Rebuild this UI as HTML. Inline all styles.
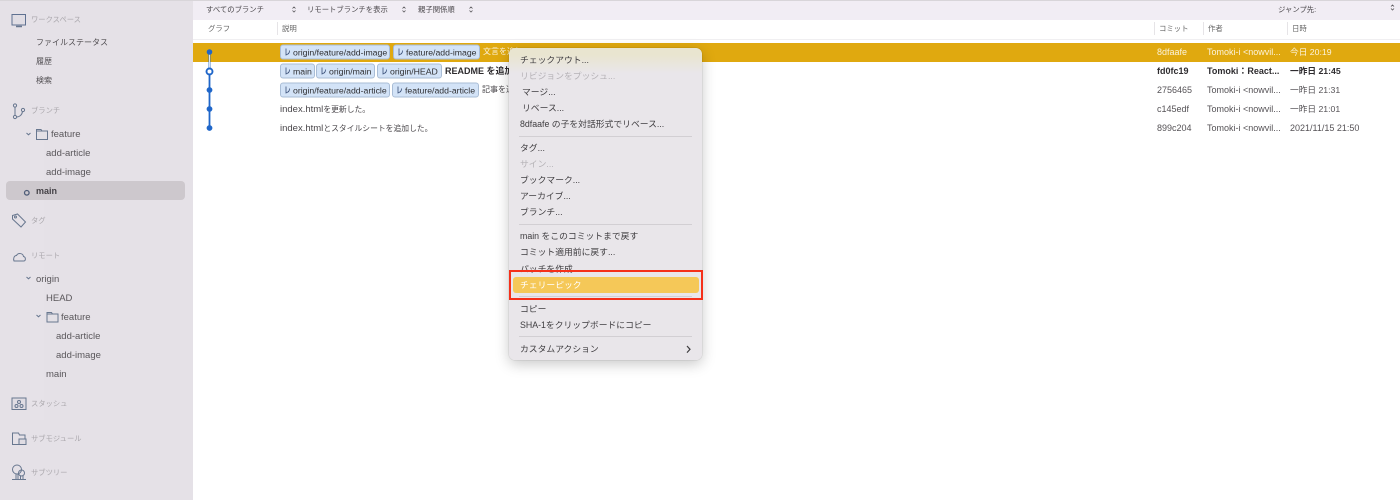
<!DOCTYPE html>
<html lang="ja"><head><meta charset="utf-8"><title>Sourcetree</title>
<style>
html,body{margin:0;padding:0;width:1400px;height:500px;overflow:hidden;background:#fff}
body{position:relative;font-family:"Liberation Sans","Noto Sans CJK JP",sans-serif;font-size:9px;color:#4a474b;filter:blur(.35px)}
.t,.a{position:absolute}
.t{white-space:nowrap;line-height:14px;height:14px;transform:translateY(-7px)}
.h{color:#aaa7ac;font-size:7.3px}
.s{color:#5a575b;font-size:9.5px;transform:translateY(-6px)}
.j{color:#514e52;font-size:8px}
.g{font-size:7.4px;color:#666}
.tb{font-size:7.35px}
.ix{transform:translateY(-6px)}
.tag{position:absolute;height:15px;line-height:14px;background:#d3e3f7;border:1px solid #a9bdd6;border-radius:3px;box-sizing:border-box;color:#2f2f32;font-size:8.7px;white-space:nowrap;padding-left:12px;transform:translateY(-7.5px)}
.tag svg{position:absolute;left:3px;top:2px}
.sep{position:absolute;left:519px;width:173px;height:1px;background:#d2cfd3}
.m{position:absolute;left:520px;white-space:nowrap;line-height:14px;height:14px;transform:translateY(-7px);color:#3f3d40;font-size:8.8px}
.d{color:#b5b2b6}
.c{position:absolute;white-space:nowrap;line-height:14px;height:14px;transform:translateY(-7px);color:#555256;font-size:9px}
.dt{font-size:8.7px}
.w{color:#fbf3dc}
.b{font-weight:bold;color:#2e2c2f}
.col{position:absolute;top:22px;width:1px;height:13px;background:#e6e4e7}
</style></head>
<body>
<div class="a" style="left:0;top:0;width:193px;height:500px;background:#e5e1e7"></div>
<div class="a" style="left:30px;top:120px;width:14px;height:300px;background:#e6e2e8"></div>
<div class="a" style="left:0;top:0;width:1400px;height:1px;background:#d8d5d9"></div>
<div class="a" style="left:193px;top:1px;width:1207px;height:19px;background:#f1edf4"></div>
<div class="a" style="left:193px;top:39px;width:1207px;height:1px;background:#f0eff1"></div>

<svg class="a" style="left:0;top:0" width="193" height="500" fill="none" stroke="#68778f" stroke-width="1">
<rect x="12" y="14.5" width="13.5" height="10.5" fill="#e0dde4" stroke="#5f7191"/><path d="M16 26.5h6" stroke-width="1.5"/>
<circle cx="15" cy="105.5" r="1.6"/><circle cx="15" cy="117" r="1.6"/><circle cx="23" cy="110" r="1.6"/><path d="M15 107v8.4M22.5 111.5c-.5 3.500-3 5.500-6 5.500"/>
<path d="M12.5 215.500l5-1.500 8 8-4.500 5-8.500-8z"/><circle cx="15.500" cy="217" r="1"/>
<path d="M14 261h9.500c2.500 0 2.500-4 0-4.500-.5-3.500-5.500-4-7-1-2.500 0-3.500 3.500-2.500 5.500z"/>
<rect x="12" y="398" width="14" height="11.500" fill="#dfdce3"/><circle cx="19" cy="402" r="1.500"/><circle cx="16.500" cy="406" r="1.500"/><circle cx="21.500" cy="406" r="1.500"/>
<path d="M12.500 433h6l1 2h5.500v9.500h-12.500z"/><rect x="19" y="439" width="7" height="5.500" fill="#dfdce3"/>
<circle cx="17" cy="469.500" r="4.500"/><circle cx="21.500" cy="473" r="3"/><path d="M12 479.500h14M16 474v5M18 474v5M20.500 476v3.500M23 476v3.500"/>
<rect x="36.500" y="131" width="11" height="8.500" fill="#e3e0e6"/><path d="M36.500 131v-1.500h4.500l1 1.500"/>
<path d="M26.500 133l2 1.800 2-1.800M26.500 277l2 1.800 2-1.800M36.500 315l2 1.800 2-1.800"/>
<rect x="47" y="314" width="11" height="8" fill="#e3e0e6"/><path d="M47 314v-1.500h4.500l1 1.500"/>
</svg>
<div class="a" style="left:6px;top:181px;width:179px;height:19px;background:#cdc8cd;border-radius:4px"></div>
<svg class="a" style="left:23px;top:189px" width="8" height="8" fill="none"><circle cx="3.800" cy="3.800" r="2.300" stroke="#4f5d78" stroke-width="1.300"/></svg>

<span class="t h" style="left:31px;top:20px">ワークスペース</span>
<span class="t j" style="left:36px;top:43px">ファイルステータス</span>
<span class="t j" style="left:36px;top:62px">履歴</span>
<span class="t j" style="left:36px;top:81px">検索</span>
<span class="t h" style="left:31px;top:111px">ブランチ</span>
<span class="t s" style="left:51px;top:134px">feature</span>
<span class="t s" style="left:46px;top:153px">add-article</span>
<span class="t s" style="left:46px;top:172px">add-image</span>
<span class="t b" style="left:36px;top:191px;color:#454247;font-size:9px">main</span>
<span class="t h" style="left:31px;top:221px">タグ</span>
<span class="t h" style="left:31px;top:256px">リモート</span>
<span class="t s" style="left:36px;top:279px">origin</span>
<span class="t s" style="left:46px;top:298px">HEAD</span>
<span class="t s" style="left:61px;top:317px">feature</span>
<span class="t s" style="left:56px;top:336px">add-article</span>
<span class="t s" style="left:56px;top:355px">add-image</span>
<span class="t s" style="left:46px;top:374px">main</span>
<span class="t h" style="left:31px;top:404px">スタッシュ</span>
<span class="t h" style="left:31px;top:439px">サブモジュール</span>
<span class="t h" style="left:31px;top:473px">サブツリー</span>

<span class="t tb" style="left:206px;top:10px">すべてのブランチ</span>
<span class="t tb" style="left:307px;top:10px">リモートブランチを表示</span>
<span class="t tb" style="left:418px;top:10px">親子関係順</span>
<span class="t tb" style="left:1278px;top:10px">ジャンプ先:</span>
<svg class="a" style="left:0;top:0" width="1400" height="20" fill="none" stroke="#5c5a5e" stroke-width=".8">
<path d="M292.500 8.500l1.500-1.500 1.500 1.500M292.500 10.500l1.500 1.500 1.500-1.500M402.500 8.500l1.500-1.500 1.500 1.500M402.500 10.500l1.500 1.500 1.500-1.500M469.500 8.500l1.500-1.500 1.500 1.500M469.500 10.500l1.500 1.500 1.500-1.500M1391 6.500l1.500-1.500 1.500 1.500M1391 8.500l1.500 1.500 1.500-1.500"/>
</svg>

<span class="t g" style="left:208px;top:29px">グラフ</span>
<span class="t g" style="left:282px;top:29px">説明</span>
<span class="t g" style="left:1159px;top:29px">コミット</span>
<span class="t g" style="left:1208px;top:29px">作者</span>
<span class="t g" style="left:1292px;top:29px">日時</span>
<div class="col" style="left:277px"></div><div class="col" style="left:1154px"></div><div class="col" style="left:1203px"></div><div class="col" style="left:1287px"></div>

<div class="a" style="left:193px;top:43px;width:1207px;height:19px;background:#e0a90f"></div>

<svg class="a" style="left:200px;top:43px" width="20" height="95" fill="none">
<path d="M9.500 9v76" stroke="#1f66c9" stroke-width="1.800"/>
<path d="M9.500 11v16" stroke="#eef3fb" stroke-width=".9"/>
<circle cx="9.500" cy="9" r="2.800" fill="#1f66c9"/>
<circle cx="9.500" cy="28.500" r="3" fill="#fff" stroke="#1f66c9" stroke-width="1.900"/>
<circle cx="9.500" cy="47" r="2.900" fill="#1f66c9"/>
<circle cx="9.500" cy="66" r="2.900" fill="#1f66c9"/>
<circle cx="9.500" cy="85" r="2.900" fill="#1f66c9"/>
</svg>

<div class="tag" style="left:280px;top:52px;width:110px">origin/feature/add-image<svg width="8" height="10" fill="none" stroke="#3a4f78" stroke-width=".8"><path d="M2 1v7M2 7c2.500 0 3.500-1.500 3.500-4"/></svg></div>
<div class="tag" style="left:393px;top:52px;width:87px">feature/add-image<svg width="8" height="10" fill="none" stroke="#3a4f78" stroke-width=".8"><path d="M2 1v7M2 7c2.500 0 3.500-1.500 3.500-4"/></svg></div>
<span class="t w" style="left:483px;top:52px;font-size:8px">文言を追加</span>

<div class="tag" style="left:280px;top:71px;width:35px">main<svg width="8" height="10" fill="none" stroke="#3a4f78" stroke-width=".8"><path d="M2 1v7M2 7c2.500 0 3.500-1.500 3.500-4"/></svg></div>
<div class="tag" style="left:316px;top:71px;width:59px">origin/main<svg width="8" height="10" fill="none" stroke="#3a4f78" stroke-width=".8"><path d="M2 1v7M2 7c2.500 0 3.500-1.500 3.500-4"/></svg></div>
<div class="tag" style="left:377px;top:71px;width:65px">origin/HEAD<svg width="8" height="10" fill="none" stroke="#3a4f78" stroke-width=".8"><path d="M2 1v7M2 7c2.500 0 3.500-1.500 3.500-4"/></svg></div>
<span class="t b" style="left:445px;top:71px">README を追加</span>

<div class="tag" style="left:280px;top:90px;width:110px">origin/feature/add-article<svg width="8" height="10" fill="none" stroke="#3a4f78" stroke-width=".8"><path d="M2 1v7M2 7c2.500 0 3.500-1.500 3.500-4"/></svg></div>
<div class="tag" style="left:392px;top:90px;width:87px">feature/add-article<svg width="8" height="10" fill="none" stroke="#3a4f78" stroke-width=".8"><path d="M2 1v7M2 7c2.500 0 3.500-1.500 3.500-4"/></svg></div>
<span class="t" style="left:482px;top:90px;font-size:8px">記事を追加</span>
<span class="t ix" style="left:280px;top:109px;font-size:9.5px">index.html<span style="font-size:7.8px">を更新した。</span></span>
<span class="t ix" style="left:280px;top:128px;font-size:9.5px">index.html<span style="font-size:7.8px">とスタイルシートを追加した。</span></span>

<span class="c w" style="left:1157px;top:52px">8dfaafe</span>
<span class="c w" style="left:1207px;top:52px">Tomoki-i &lt;nowvil...</span>
<span class="c w dt" style="left:1290px;top:52px">今日 20:19</span>
<span class="c b" style="left:1157px;top:71px">fd0fc19</span>
<span class="c b" style="left:1207px;top:71px">Tomoki：React...</span>
<span class="c b dt" style="left:1290px;top:71px">一昨日 21:45</span>
<span class="c" style="left:1157px;top:90px">2756465</span>
<span class="c" style="left:1207px;top:90px">Tomoki-i &lt;nowvil...</span>
<span class="c dt" style="left:1290px;top:90px">一昨日 21:31</span>
<span class="c" style="left:1157px;top:109px">c145edf</span>
<span class="c" style="left:1207px;top:109px">Tomoki-i &lt;nowvil...</span>
<span class="c dt" style="left:1290px;top:109px">一昨日 21:01</span>
<span class="c" style="left:1157px;top:128px">899c204</span>
<span class="c" style="left:1207px;top:128px">Tomoki-i &lt;nowvil...</span>
<span class="c" style="left:1290px;top:128px">2021/11/15 21:50</span>

<div class="a" style="left:509px;top:48px;width:193px;height:312px;border-radius:6px;box-shadow:0 4px 14px rgba(0,0,0,.22),0 0 1px rgba(0,0,0,.35);background:linear-gradient(#e9e5d0 0,#e9e5d0 7px,#e9e6ea 25px)"></div>

<span class="m" style="top:60px">チェックアウト...</span>
<span class="m d" style="top:76px">リビジョンをプッシュ...</span>
<span class="m" style="top:92px;left:522px">マージ...</span>
<span class="m" style="top:108px;left:522px">リベース...</span>
<span class="m" style="top:124px">8dfaafe の子を対話形式でリベース...</span>
<div class="sep" style="top:136px"></div>
<span class="m" style="top:148px">タグ...</span>
<span class="m d" style="top:164px">サイン...</span>
<span class="m" style="top:180px">ブックマーク...</span>
<span class="m" style="top:196px">アーカイブ...</span>
<span class="m" style="top:212px">ブランチ...</span>
<div class="sep" style="top:224px"></div>
<span class="m" style="top:236px">main をこのコミットまで戻す</span>
<span class="m" style="top:252px">コミット適用前に戻す...</span>
<span class="m" style="top:268.500px">パッチを作成...</span>
<div class="a" style="left:509px;top:270px;width:194px;height:30px;box-sizing:border-box;border:2px solid #f5301a"></div>
<div class="a" style="left:513px;top:277px;width:186px;height:16px;background:#f5c858;border-radius:3px"></div>
<span class="m" style="top:285px;color:#fff">チェリーピック</span>
<div class="sep" style="top:296px"></div>
<span class="m" style="top:309px">コピー</span>
<span class="m" style="top:325px">SHA-1をクリップボードにコピー</span>
<div class="sep" style="top:336px"></div>
<span class="m" style="top:349px">カスタムアクション</span>
<svg class="a" style="left:685px;top:345px" width="8" height="9" fill="none"><path d="M2 1l3 3.300-3 3.300" stroke="#3f3d40" stroke-width="1.200"/></svg>
</body></html>
